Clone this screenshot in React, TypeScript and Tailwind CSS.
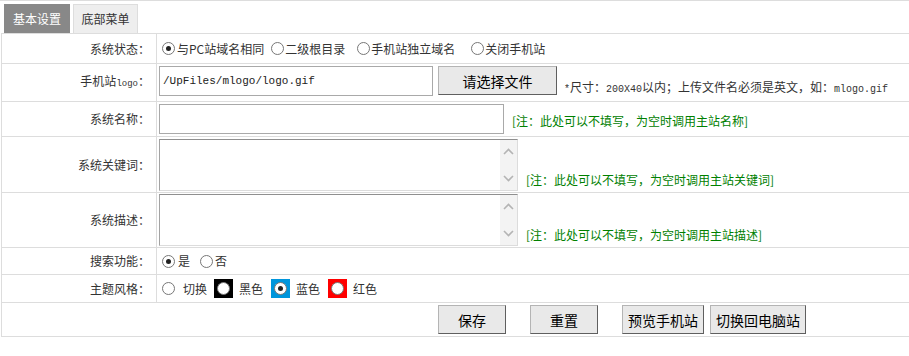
import React from "react";

function Radio({ checked }: { checked?: boolean }) {
  return (
    <span className="inline-flex h-[13px] w-[13px] shrink-0 items-center justify-center rounded-full border border-[#777] bg-white">
      {checked && <span className="h-[5px] w-[5px] rounded-full bg-[#222]" />}
    </span>
  );
}

function Swatch({ color, checked }: { color: string; checked?: boolean }) {
  return (
    <span className={`inline-flex h-[19px] w-[19px] shrink-0 items-center justify-center ${color}`}>
      <Radio checked={checked} />
    </span>
  );
}

function Row({
  label,
  h,
  children,
  cell = "items-center",
}: {
  label: React.ReactNode;
  h: string;
  children: React.ReactNode;
  cell?: string;
}) {
  return (
    <div className={`flex border-b border-[#ddd] ${h}`}>
      <div className="flex w-[155px] shrink-0 items-center justify-end border-r border-[#ddd] pr-[6px] text-[12px] text-[#333]">
        <span>{label}</span>
      </div>
      <div className={`flex flex-1 pl-[2px] ${cell}`}>{children}</div>
    </div>
  );
}

function Chevron({ up }: { up?: boolean }) {
  return (
    <svg width="11" height="7" viewBox="0 0 11 7">
      <path
        d={up ? "M1 6 L5.5 1.5 L10 6" : "M1 1 L5.5 5.5 L10 1"}
        fill="none"
        stroke="#b4b4b4"
        strokeWidth="1.6"
      />
    </svg>
  );
}

function TextBox() {
  return (
    <div className="flex h-[52px] w-[359px] border border-t-[#8f8f8f] border-l-[#a3a3a3] border-r-[#dcdcdc] border-b-[#dcdcdc] bg-white">
      <textarea className="h-full flex-1 resize-none outline-none" />
      <div className="flex w-[17px] flex-col items-center justify-between bg-[#f3f3f3] py-[8px]">
        <Chevron up />
        <Chevron />
      </div>
    </div>
  );
}

const note = "text-[12px] leading-[14px] text-[#008000]";
const btn =
  "flex h-[29px] items-center justify-center border border-[#b4b4b4] border-r-[#5f5f5f] border-b-[#5f5f5f] bg-[#e9e9e9] text-[14px] leading-none text-black";
const mono = "font-['Liberation_Mono',monospace]";

export default function App() {
  return (
    <div className="h-[356px] w-[909px] bg-white font-['Noto_Sans_CJK_SC',sans-serif] text-[12px] leading-[14px] text-[#333]">
      {/* tabs */}
      <div className="flex gap-[3px] border-t border-[#ddd] pl-[4px] pt-[3px]">
        <div className="flex h-[29px] w-[66px] items-center justify-center bg-[#888] text-[12px] text-white">
          基本设置
        </div>
        <div className="flex h-[29px] w-[65px] items-center justify-center border border-b-0 border-[#ddd] bg-[#eee] text-[12px] text-[#333]">
          底部菜单
        </div>
      </div>

      <div className="ml-[1px] border-l border-t border-[#ddd]">
        <Row label="系统状态：" h="h-[30px]" cell="items-center pl-[5px]">
          <Radio checked />
          <span className="ml-[2px] mr-[7px]">与PC站域名相同</span>
          <Radio />
          <span className="ml-[1px] mr-[12px]">二级根目录</span>
          <Radio />
          <span className="ml-[1px] mr-[16px]">手机站独立域名</span>
          <Radio />
          <span className="ml-[1px]">关闭手机站</span>
        </Row>

        <Row
          label={
            <>
              手机站<span className={`${mono} text-[9px]`}>logo</span>：
            </>
          }
          h="h-[38px]"
          cell="items-start pt-[2px]"
        >
          <input
            defaultValue="/UpFiles/mlogo/logo.gif"
            className={`h-[30px] w-[274px] border border-[#a9a9a9] px-[3px] text-[11px] text-[#222] outline-none ${mono}`}
          />
          <button className={`${btn} ml-[5px] w-[119px]`}>请选择文件</button>
          <span className="ml-[7px] self-end pb-[4px] text-[12px] text-[#333]">
            <span className={`${mono} text-[10px]`}>*</span>尺寸：
            <span className={`${mono} text-[10px]`}>200X40</span>
            以内；上传文件名必须是英文，如：
            <span className={`${mono} text-[10px]`}>mlogo.gif</span>
          </span>
        </Row>

        <Row label="系统名称：" h="h-[35px]" cell="items-center">
          <input className="h-[30px] w-[345px] border border-[#a9a9a9] outline-none" />
          <span className={`${note} ml-[8px] pt-[3px]`}>[注：此处可以不填写，为空时调用主站名称]</span>
        </Row>

        <Row label="系统关键词：" h="h-[56px]" cell="items-start pt-[2px]">
          <TextBox />
          <span className={`${note} ml-[8px] self-end pb-[5px]`}>[注：此处可以不填写，为空时调用主站关键词]</span>
        </Row>

        <Row label="系统描述：" h="h-[55px]" cell="items-start pt-[1px]">
          <TextBox />
          <span className={`${note} ml-[8px] self-end pb-[5px]`}>[注：此处可以不填写，为空时调用主站描述]</span>
        </Row>

        <Row label="搜索功能：" h="h-[27px]" cell="items-center pl-[5px]">
          <Radio checked />
          <span className="ml-[3px] mr-[10px]">是</span>
          <Radio />
          <span className="ml-[2px]">否</span>
        </Row>

        <Row label="主题风格：" h="h-[28px]" cell="items-center pl-[5px]">
          <Radio />
          <span className="ml-[8px] mr-[7px]">切换</span>
          <Swatch color="bg-black" />
          <span className="ml-[6px] mr-[8px]">黑色</span>
          <Swatch color="bg-[#0096dc]" checked />
          <span className="ml-[6px] mr-[8px]">蓝色</span>
          <Swatch color="bg-[#ff0000]" />
          <span className="ml-[6px]">红色</span>
        </Row>

        <div className="flex h-[34px] items-center border-b border-[#ddd] pl-[436px]">
          <button className={`${btn} w-[68px]`}>保存</button>
          <button className={`${btn} ml-[24px] w-[68px]`}>重置</button>
          <button className={`${btn} ml-[24px] w-[82px]`}>预览手机站</button>
          <button className={`${btn} ml-[6px] w-[96px]`}>切换回电脑站</button>
        </div>
      </div>
    </div>
  );
}
